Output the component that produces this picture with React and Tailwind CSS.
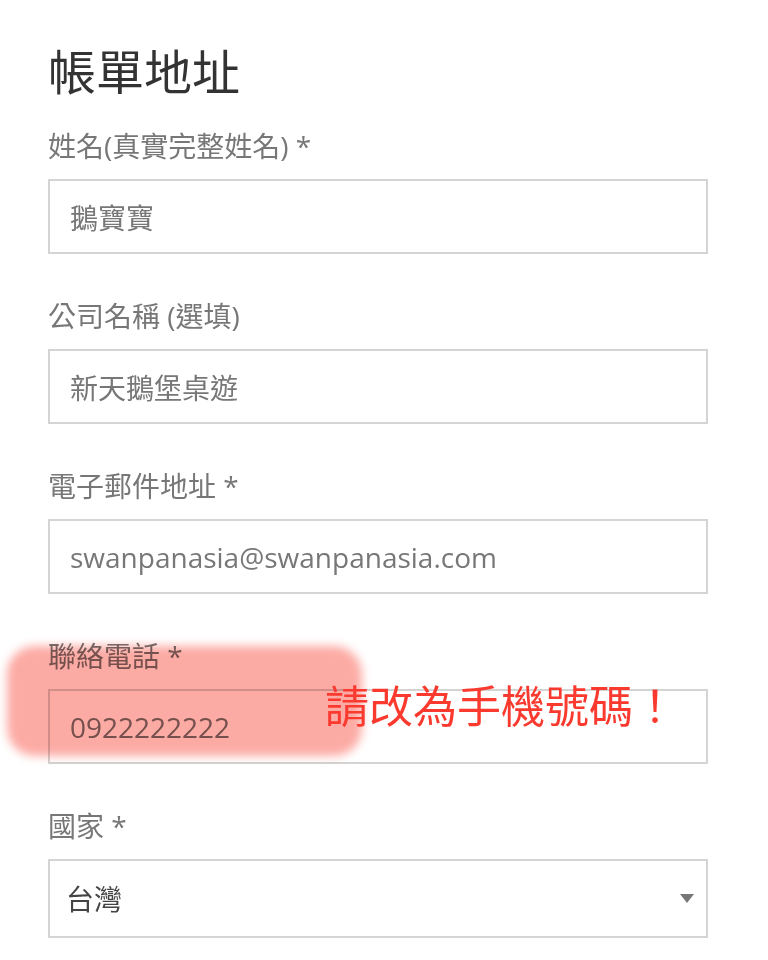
import React from "react";

const fields = [
  { label: "姓名(真實完整姓名) *", value: "鵝寶寶" },
  { label: "公司名稱 (選填)", value: "新天鵝堡桌遊" },
  { label: "電子郵件地址 *", value: "swanpanasia@swanpanasia.com" },
  { label: "聯絡電話 *", value: "0922222222", note: true },
];

const Field = ({ label, value, note }) => (
  <div className="relative mb-[42px]">
    <label className="block text-[28px] leading-[40px] text-[#777] mb-[13px]">{label}</label>
    <input
      readOnly
      value={value}
      className="block w-full h-[75px] border-2 border-[#d4d4d4] px-[20px] text-[28px] text-[#777] bg-white outline-none"
    />
    {note && (
      <>
        {/* marker highlight */}
        <div className="absolute left-[-41px] top-[10px] w-[355px] h-[110px] rounded-[28px] bg-[#fca69f] opacity-95 blur-[5px] mix-blend-multiply pointer-events-none" />
        <div className="absolute left-[277px] top-[42px] text-[44px] leading-[56px] text-[#fa3a2f] whitespace-nowrap">
          請改為手機號碼！
        </div>
      </>
    )}
  </div>
);

export default function App() {
  return (
    <div
      className="w-[768px] h-[960px] bg-white px-12 pt-[44px] overflow-hidden"
      style={{ fontFamily: '"Open Sans", "Noto Sans CJK TC", sans-serif' }}
    >
      <div className="w-[660px]">
        <h1 className="text-[48px] leading-[56px] text-[#333] mb-[26px]">帳單地址</h1>
        {fields.map((f) => (
          <Field key={f.label} {...f} />
        ))}
        <label className="block text-[28px] leading-[40px] text-[#777] mb-[13px]">國家 *</label>
        <div className="flex items-center justify-between h-[79px] border-2 border-[#d4d4d4] pl-[16px] pr-[12px]">
          <span className="text-[28px] text-[#444]">台灣</span>
          <svg width="14" height="9" viewBox="0 0 14 9">
            <path d="M0 0 L14 0 L7 9 Z" fill="#777" />
          </svg>
        </div>
      </div>
    </div>
  );
}
